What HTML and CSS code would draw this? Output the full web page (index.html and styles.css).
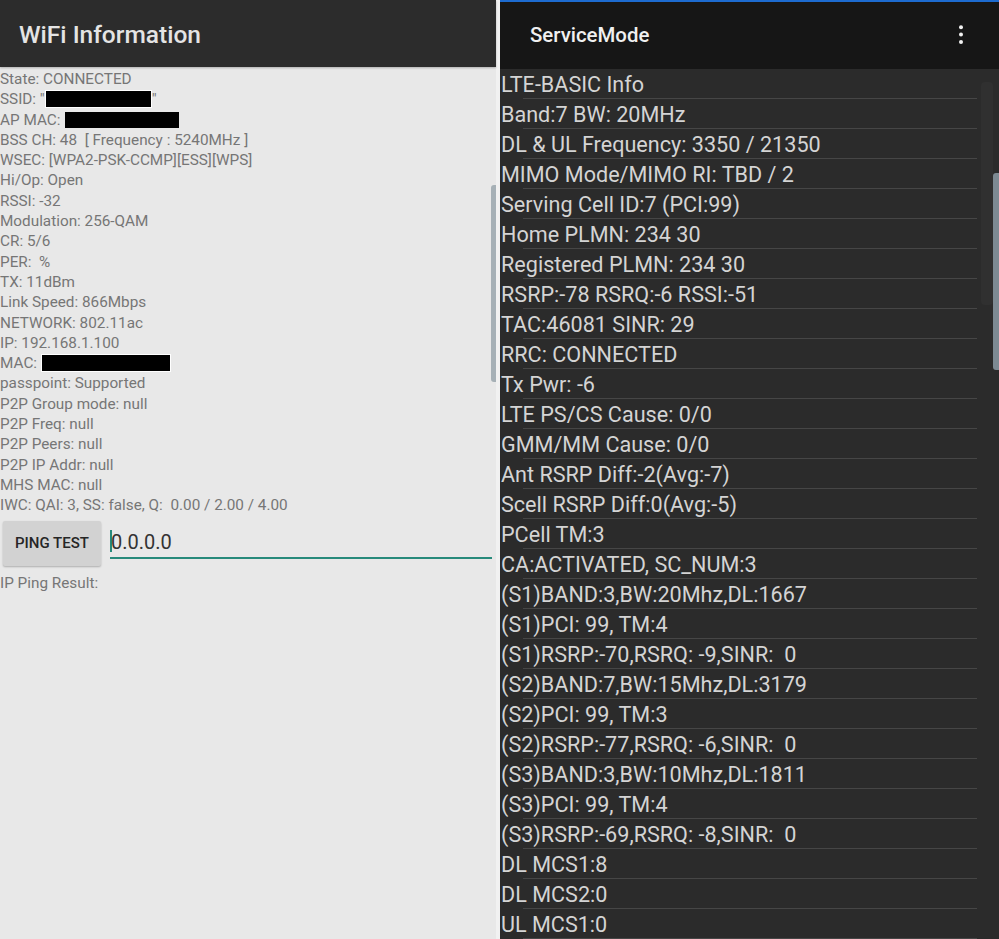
FILE: index.html
```html
<!DOCTYPE html>
<html>
<head>
<meta charset="utf-8">
<link rel="stylesheet" href="styles.css">
</head>
<body>
<div class="screen">
  <section class="wifi">
    <header class="wifi-bar">WiFi Information</header>
    <div class="wifi-body">
      <div class="info">
        <div class="line">State: CONNECTED</div>
        <div class="line">SSID: "<span class="redact r-ssid"></span>"</div>
        <div class="line">AP MAC: <span class="redact r-apmac"></span></div>
        <div class="line">BSS CH: 48&nbsp; [ Frequency : 5240MHz ]</div>
        <div class="line">WSEC: [WPA2-PSK-CCMP][ESS][WPS]</div>
        <div class="line">Hi/Op: Open</div>
        <div class="line">RSSI: -32</div>
        <div class="line">Modulation: 256-QAM</div>
        <div class="line">CR: 5/6</div>
        <div class="line">PER:&nbsp; %</div>
        <div class="line">TX: 11dBm</div>
        <div class="line">Link Speed: 866Mbps</div>
        <div class="line">NETWORK: 802.11ac</div>
        <div class="line">IP: 192.168.1.100</div>
        <div class="line">MAC: <span class="redact r-mac"></span></div>
        <div class="line">passpoint: Supported</div>
        <div class="line">P2P Group mode: null</div>
        <div class="line">P2P Freq: null</div>
        <div class="line">P2P Peers: null</div>
        <div class="line">P2P IP Addr: null</div>
        <div class="line">MHS MAC: null</div>
        <div class="line">IWC: QAI: 3, SS: false, Q:&nbsp; 0.00 / 2.00 / 4.00</div>
      </div>
      <div class="ping-row">
        <div class="ping-btn">PING TEST</div>
        <div class="ping-input"><span class="caret"></span>0.0.0.0</div>
      </div>
      <div class="line result">IP Ping Result:</div>
      <div class="scroll-thumb left-thumb"></div>
    </div>
  </section>
  <section class="service">
    <header class="svc-bar">
      <span class="svc-title">ServiceMode</span>
      <svg class="kebab" width="4" height="20" viewBox="0 0 4 20"><circle cx="2" cy="2.2" r="2" fill="#f2f2f2"/><circle cx="2" cy="9.6" r="2" fill="#f2f2f2"/><circle cx="2" cy="17" r="2" fill="#f2f2f2"/></svg>
    </header>
    <div class="svc-body">
      <div class="row">LTE-BASIC Info</div>
      <div class="row">Band:7 BW: 20MHz</div>
      <div class="row">DL &amp; UL Frequency: 3350 / 21350</div>
      <div class="row">MIMO Mode/MIMO RI: TBD / 2</div>
      <div class="row">Serving Cell ID:7 (PCI:99)</div>
      <div class="row">Home PLMN: 234 30</div>
      <div class="row">Registered PLMN: 234 30</div>
      <div class="row">RSRP:-78 RSRQ:-6 RSSI:-51</div>
      <div class="row">TAC:46081 SINR: 29</div>
      <div class="row">RRC: CONNECTED</div>
      <div class="row">Tx Pwr: -6</div>
      <div class="row">LTE PS/CS Cause: 0/0</div>
      <div class="row">GMM/MM Cause: 0/0</div>
      <div class="row">Ant RSRP Diff:-2(Avg:-7)</div>
      <div class="row">Scell RSRP Diff:0(Avg:-5)</div>
      <div class="row">PCell TM:3</div>
      <div class="row">CA:ACTIVATED, SC_NUM:3</div>
      <div class="row">(S1)BAND:3,BW:20Mhz,DL:1667</div>
      <div class="row">(S1)PCI: 99, TM:4</div>
      <div class="row">(S1)RSRP:-70,RSRQ: -9,SINR:&nbsp; 0</div>
      <div class="row">(S2)BAND:7,BW:15Mhz,DL:3179</div>
      <div class="row">(S2)PCI: 99, TM:3</div>
      <div class="row">(S2)RSRP:-77,RSRQ: -6,SINR:&nbsp; 0</div>
      <div class="row">(S3)BAND:3,BW:10Mhz,DL:1811</div>
      <div class="row">(S3)PCI: 99, TM:4</div>
      <div class="row">(S3)RSRP:-69,RSRQ: -8,SINR:&nbsp; 0</div>
      <div class="row">DL MCS1:8</div>
      <div class="row">DL MCS2:0</div>
      <div class="row">UL MCS1:0</div>
      <div class="track"></div>
      <div class="scroll-thumb right-thumb"></div>
    </div>
  </section>
</div>
</body>
</html>
```

FILE: styles.css
```css
* { box-sizing: border-box; }
html, body { margin: 0; padding: 0; }
body {
  width: 999px;
  height: 939px;
  overflow: hidden;
  background: #f1f1f1;
  font-family: Roboto, "Liberation Sans", Arial, sans-serif;
}
.screen {
  display: flex;
  gap: 4px;
  height: 939px;
}
.wifi {
  width: 496px;
  display: flex;
  flex-direction: column;
  background: #e8e8e8;
}
.wifi-bar {
  height: 67px;
  background: #2c2c2c;
  color: #e4e4e4;
  font-size: 24.5px;
  font-weight: 500;
  padding: 20px 0 0 19px;
  box-shadow: 0 1px 2px rgba(0,0,0,0.25);
  position: relative;
  z-index: 1;
}
.wifi-body {
  flex: 1;
  position: relative;
  padding-top: 2px;
}
.line {
  font-size: 15.3px;
  line-height: 20.3px;
  height: 20.3px;
  color: #767676;
  white-space: nowrap;
}
.redact {
  display: inline-block;
  vertical-align: top;
  margin-top: 1px;
  height: 18px;
  background: #000;
  border: 1px solid #fff;
}
.r-ssid { width: 107px; }
.r-apmac { width: 116px; border-color: #e8e8e8; }
.r-mac { width: 130px; }
.ping-row {
  display: flex;
  align-items: flex-start;
  margin-top: 5px;
  height: 48px;
}
.ping-btn {
  margin-left: 3px;
  width: 98px;
  height: 45px;
  background: #d2d2d2;
  border-radius: 2px;
  box-shadow: 0 1px 2px rgba(0,0,0,0.25);
  color: #262626;
  font-size: 15px;
  font-weight: 500;
  display: flex;
  align-items: center;
  justify-content: center;
}
.ping-input {
  margin-left: 9px;
  width: 382px;
  height: 38px;
  border-bottom: 2px solid #278a7b;
  color: #333;
  font-size: 20px;
  padding-top: 9px;
  display: flex;
  align-items: flex-start;
}
.caret {
  display: inline-block;
  width: 2px;
  height: 22px;
  background: #278a7b;
  margin-right: -1px;
}
.result {
  margin-top: 4px;
}
.scroll-thumb {
  position: absolute;
  width: 5px;
  border-radius: 3px 0 0 3px;
}
.left-thumb {
  left: 491px;
  top: 118px;
  height: 197px;
  background: #a6b0b6;
}
.service {
  width: 499px;
  display: flex;
  flex-direction: column;
  background: #2b2b2b;
}
.svc-bar {
  height: 69px;
  border-top: 2px solid #1d6bd0;
  background: #161616;
  display: flex;
  align-items: center;
  padding: 0 36px 1px 30px;
  justify-content: space-between;
}
.svc-title {
  color: #f0f0f0;
  font-size: 20.4px;
  font-weight: 500;
}
.kebab { display: block; }
.svc-body {
  flex: 1;
  position: relative;
}
.row {
  height: 30px;
  line-height: 28px;
  padding-top: 2px;
  padding-left: 1px;
  font-size: 21.6px;
  color: #d4d4d4;
  white-space: nowrap;
  position: relative;
}
.row::after {
  content: "";
  position: absolute;
  left: 23px;
  width: 454px;
  bottom: 0;
  height: 1px;
  background: #464646;
}
.track {
  position: absolute;
  left: 481px;
  top: 13px;
  width: 12px;
  height: 223px;
  background: #303030;
  border-radius: 4px;
}
.right-thumb {
  left: 493px;
  top: 104px;
  width: 6px;
  height: 197px;
  background: #7d8a93;
}
```
